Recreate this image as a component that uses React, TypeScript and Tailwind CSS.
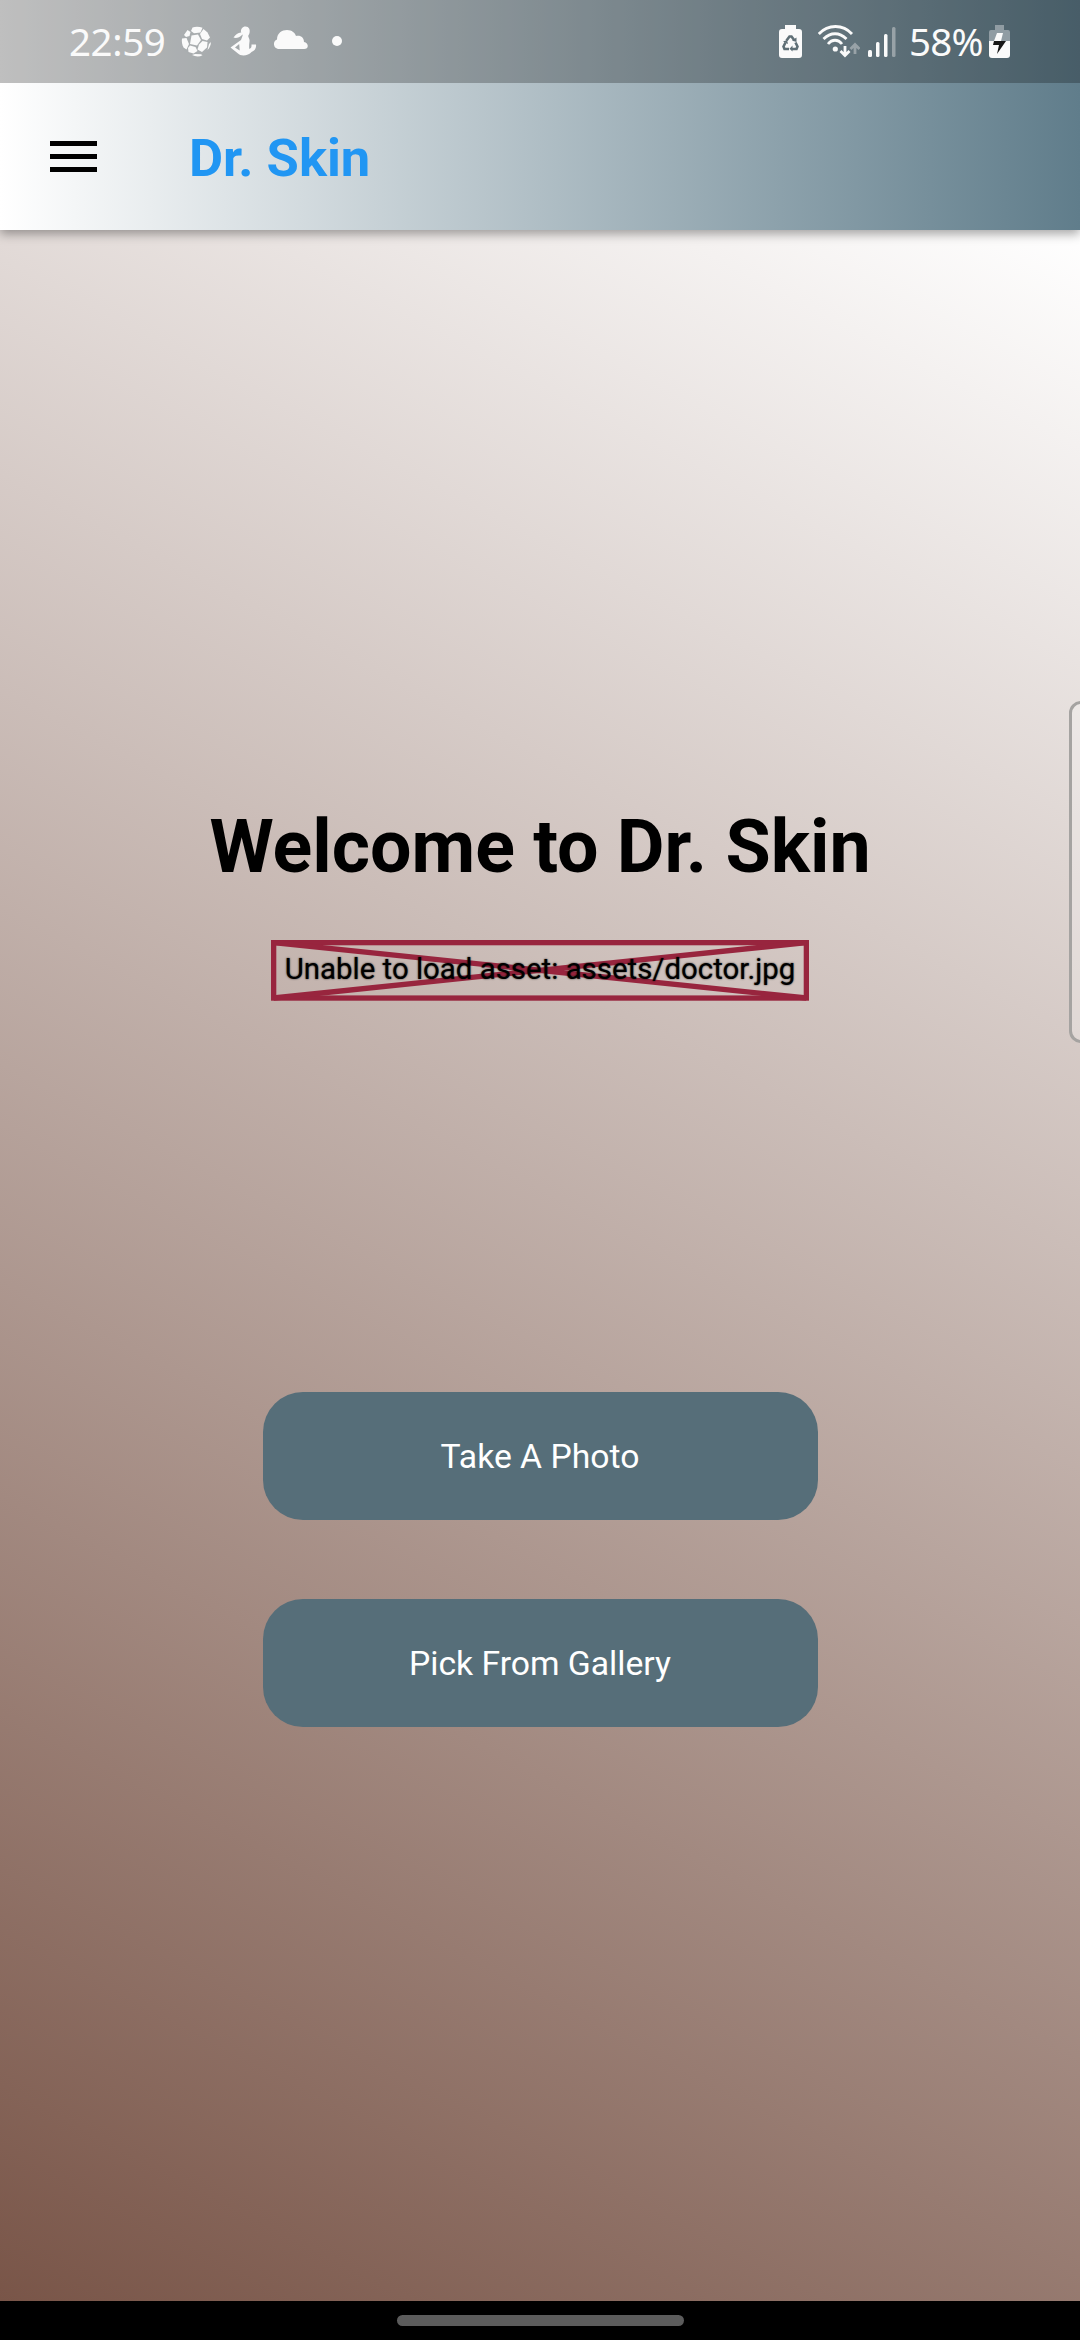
import React from "react";

function StatusBar() {
  return (
    <div className="flex h-[83px] shrink-0 items-start justify-between bg-black/25 pl-[69px] pr-[70px] text-[#fafafa]">
      <div className="flex items-start">
        <span className="mt-[14px] w-[97px] whitespace-nowrap text-[38.5px] leading-[54px] tracking-[-0.4px] font-['Noto_Sans',sans-serif] font-normal">22:59</span>
        <svg className="ml-[15px] mt-[25px]" width="31" height="33" viewBox="0 0 31 33">
          <circle cx="15.5" cy="16.500" r="15" fill="#a9adaf" />
          <g fill="#fafafa" strokeLinejoin="round">
            <path d="M10.500 10.500L17 9.500 20 15l-4 5.500L9 19z" />
            <path d="M11.500 2.500c3-1.200 7-1 10 .3L19.500 7.500l-6.500.8L10 6z" />
            <path d="M22.500 4l4 3.500 2.500 5-3 3-5-1.500-2-5z" />
            <path d="M18 19.500l3.500-3.500 5 1-.5 5.500-5 4.500-4.500-2.500z" />
            <path d="M9 20.500l5.500 1.500 2 4-4 2.500L7.500 27 7 23z" />
            <path d="M1 13.500l4.500-.5 2.500 6-2.500 5.500-3-2C1 19.500.500 16.500 1 13.500z" />
            <path d="M3 10l3.500-5 3 2-1 4-3.500 1z" />
            <path d="M11 30l3-1 6 .3 1.500.9c-3 1.600-7 1.600-10.500-.2z" />
            <path d="M28 19l2-2c-.3 3.500-1.500 6-3.500 8z" />
          </g>
        </svg>
        <svg className="ml-[18px] mt-[26px]" width="27" height="31" viewBox="0 0 27 31" fill="#fafafa">
          <path d="M15.500.5c3.500 0 4.800 3 4 6.500-.5 2.500-2 3.500-3.500 3.500-2.500 0-4.500-2-5-4.500-.4-3 1.500-5.500 4.500-5.500z" />
          <path d="M12 6.500C8 6 6 8.500 3.500 11.500 6 12.500 9.500 11.500 12 9zM13 8.500h5c0 3 2 4 1.500 7-.4 3-.5 5-.2 7.500 2.500-1 2.200-3 2.200-4.500h4.500c.5 3.500-1 6-4.500 7.500-3 4-11 4.500-13.500 1.500L.5 21.500 11 14z" />
          <path d="M5 21.500l4.200-3.500.5 6.500z" fill="#a3a8aa" />
        </svg>
        <svg className="ml-[16px] mt-[30px]" width="35" height="20" viewBox="0 0 35 20" fill="#fafafa">
          <path d="M5 19a5 5 0 0 1-1-9.500C4 3 9 0 14 0c5 0 8 3 9 6 5-1 8 2 8 6 5 1 5 7 0 7z" />
        </svg>
        <span className="ml-[24px] mt-[36px] size-[10px] rounded-full bg-[#fafafa]" />
      </div>
      <div className="flex items-start">
        <svg className="mt-[25px]" width="23" height="33" viewBox="0 0 23 33">
          <path d="M6 0h11v4h3a3 3 0 0 1 3 3v23a3 3 0 0 1-3 3H3a3 3 0 0 1-3-3V7a3 3 0 0 1 3-3h3z" fill="#fafafa" />
          <path d="M7.500 15.500l3-4h2l3 4M16.500 17.500l2 4-1 2.500H13M10 24H5.500l-1-2.500 2-4" fill="none" stroke="#5f6f76" strokeWidth="2.600" />
          <path d="M17.500 12.500v4.500l-4.500-1.500zM13.500 20.500v6l-3-2.800zM9 19l-1-4-4 1.500z" fill="#5f6f76" />
        </svg>
        <svg className="ml-[16px] mt-[25px]" width="42" height="33" viewBox="0 0 42 33" fill="none" stroke="#fafafa" strokeWidth="2.800">
          <path d="M.8 9C10-1 25-1 34 9M5.500 14c7-7 16-7 23 0M10 19c4-5 10-5 14 0" />
          <circle cx="17.300" cy="24" r="2.600" fill="#fafafa" stroke="none" />
          <path d="M27 21v9M22.500 26l4.500 4.500L31.500 26" />
          <path d="M37 29v-9M32.500 24l4.500-4.500L41.500 24" stroke="#98a2a7" />
        </svg>
        <svg className="ml-[8px] mt-[27px]" width="28" height="31" viewBox="0 0 28 31" fill="#fafafa">
          <rect x="0" y="23" width="4" height="7" rx="1.500" />
          <rect x="8" y="15" width="3.500" height="15" rx="1.500" />
          <rect x="16" y="7" width="3.500" height="23" rx="1.500" />
          <rect x="24" y="0" width="3.500" height="30" rx="1.500" fill="#98a2a7" />
        </svg>
        <span className="ml-[13px] mt-[14px] w-[76px] whitespace-nowrap text-[38.5px] leading-[54px] tracking-[-0.8px] font-['Noto_Sans',sans-serif] font-normal">58%</span>
        <svg className="ml-[4px] mt-[25px]" width="21" height="33" viewBox="0 0 21 33">
          <path d="M6 0h9v5h4a2 2 0 0 1 2 2v9H0V7a2 2 0 0 1 2-2h4z" fill="#909ca3" />
          <path d="M0 16h21v14a3 3 0 0 1-3 3H3a3 3 0 0 1-3-3z" fill="#fafafa" />
          <path d="M8 8h6l-2 8H5z" fill="#fafafa" />
          <path d="M5 16h12L8 29l2-9H4z" fill="#181818" />
        </svg>
      </div>
    </div>
  );
}

function AppBar() {
  return (
    <header className="relative z-10 flex h-[230px] shrink-0 flex-col bg-[linear-gradient(90deg,#ffffff,#607d8b)] shadow-[0_4px_10px_rgba(0,0,0,0.35)]">
      <StatusBar />
      <div className="flex flex-1 items-center pl-[50px]">
        <div className="flex w-[47px] flex-col gap-[8px]">
          <span className="h-[5px] bg-black" />
          <span className="h-[5px] bg-black" />
          <span className="h-[5px] bg-black" />
        </div>
        <h1 className="ml-[92px] mt-[2px] whitespace-nowrap text-[52.5px] leading-[62px] font-bold text-[#2196f3]">Dr. Skin</h1>
      </div>
    </header>
  );
}

function MissingAsset() {
  return (
    <div className="relative mt-[50px] flex h-[61px] w-[538px] items-center justify-center">
      <svg className="absolute inset-0" width="538" height="61" viewBox="0 0 538 61" fill="none" stroke="#98253e" strokeWidth="5.300">
        <rect x="2.650" y="2.650" width="532.700" height="55.400" />
        <path d="M2.600 2.600L535.400 58M2.600 58L535.400 2.600" />
      </svg>
      <span className="relative mb-[4px] whitespace-nowrap text-[29.4px] leading-[34px] text-black [text-shadow:0_0_2px_rgba(0,0,0,0.8)]">Unable to load asset: assets/doctor.jpg</span>
    </div>
  );
}

function ActionButton({ label }: { label: string }) {
  return (
    <button className="flex h-[128px] w-[555px] items-center justify-center rounded-[40px] bg-[#566e79] pt-[2px] text-[33.7px] text-white">
      {label}
    </button>
  );
}

export default function App() {
  return (
    <div className="flex h-[2340px] w-[1080px] flex-col overflow-hidden bg-black font-['Roboto',sans-serif]">
      <AppBar />
      <main className="relative flex h-[2071px] shrink-0 flex-col items-center bg-[linear-gradient(207.5deg,#ffffff,#795548)]">
        <h2 className="mt-[574px] whitespace-nowrap text-[73.5px] leading-[86px] font-bold text-black">Welcome to Dr. Skin</h2>
        <MissingAsset />
        <div className="mt-[391px] flex flex-col gap-[79px]">
          <ActionButton label="Take A Photo" />
          <ActionButton label="Pick From Gallery" />
        </div>
        <div className="absolute top-[471px] right-[-20px] h-[342px] w-[31px] rounded-[12px] border-[3px] border-[#a5a3a1] bg-white/25" />
      </main>
      <footer className="flex h-[39px] shrink-0 justify-center pt-[14px]">
        <div className="h-[11px] w-[287px] rounded-full bg-[#5c5c5c]" />
      </footer>
    </div>
  );
}
